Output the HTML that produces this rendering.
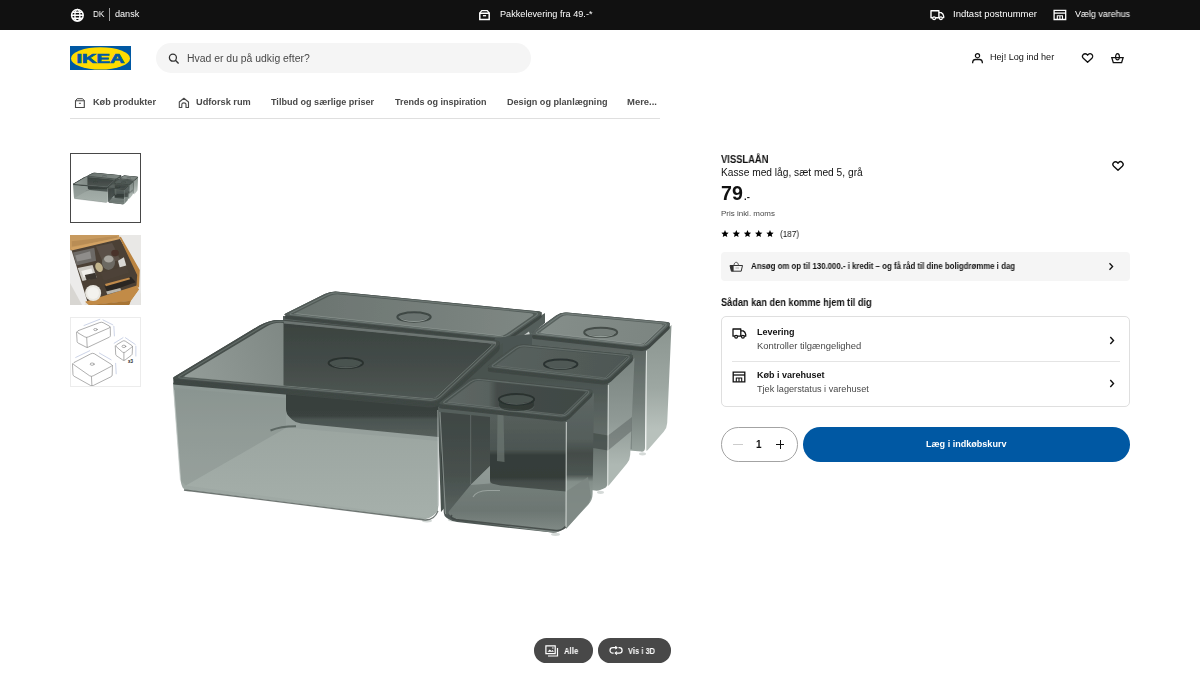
<!DOCTYPE html>
<html lang="da">
<head>
<meta charset="utf-8">
<title>VISSLAÅN Kasse med låg, sæt med 5, grå - IKEA</title>
<style>
*{box-sizing:border-box;margin:0;padding:0}
html,body{width:1200px;height:675px;overflow:hidden;background:#fff}
body{font-family:"Liberation Sans",sans-serif;color:#111;position:relative;font-size:10px}
.abs{position:absolute}
.t{position:absolute;white-space:nowrap;line-height:1;transform-origin:0 0;display:block;will-change:transform}
.b{font-weight:bold}
#topbar{position:absolute;left:0;top:0;width:1200px;height:30px;background:#111}
#search{position:absolute;left:156px;top:43px;width:374.5px;height:30px;border-radius:15px;background:#f5f5f5}
#navline{position:absolute;left:70px;top:118px;width:590px;height:1px;background:#dfdfdf}
.thumb{position:absolute;left:70px;width:71px;height:71px;overflow:hidden}
#credit{position:absolute;left:720.5px;top:252px;width:409.5px;height:29px;border-radius:4px;background:#f5f5f5}
#deliv{position:absolute;left:720.5px;top:315.5px;width:409.5px;height:91px;border:1px solid #dfdfdf;border-radius:5px}
#qty{position:absolute;left:720.5px;top:427px;width:77px;height:34.5px;border:1px solid #a3a3a3;border-radius:17.25px}
#buy{position:absolute;left:802.5px;top:427px;width:327.5px;height:34.5px;border-radius:17.25px;background:#0058a3}
.pill{position:absolute;top:638.3px;height:24.7px;border-radius:12.35px;background:#484848}
</style>
</head>
<body>
<!-- TOP BAR -->
<div id="topbar" style="height:29.5px">
  <svg class="abs" style="left:70px;top:7.5px" width="15" height="15" viewBox="0 0 15 15"><circle cx="7.4" cy="7.3" r="5.8" fill="none" stroke="#fff" stroke-width="1.5"/><ellipse cx="7.4" cy="7.3" rx="2.5" ry="5.8" fill="none" stroke="#fff" stroke-width="1.4"/><path d="M1.6 7.300h11.600M2.500 4.300h9.800M2.500 10.300h9.800" stroke="#fff" stroke-width="1.400" fill="none"/></svg>
  <div class="abs" style="left:109.200px;top:8.300px;width:1px;height:12.400px;background:#9c9c9c"></div>
  <svg class="abs" style="left:478px;top:9px" width="13" height="12" viewBox="0 0 13 12"><path d="M1.800 4.200h9.400v6.200H1.800z" fill="none" stroke="#fff" stroke-width="1.500"/><path d="M1.800 4.200L3.700 1.600h5.600l1.900 2.600" fill="none" stroke="#fff" stroke-width="1.300" stroke-linejoin="round"/><path d="M4.900 6.700h3.200" stroke="#fff" stroke-width="1.300"/></svg>
  <svg class="abs" style="left:930px;top:9px" width="15" height="12" viewBox="0 0 15 12"><path d="M1 1.700h7.900v7H1z" fill="none" stroke="#fff" stroke-width="1.400" stroke-linejoin="round"/><path d="M8.900 3.600h2.300c1.300.700 2.200 2 2.500 3.500v1.600H8.900" fill="none" stroke="#fff" stroke-width="1.300" stroke-linejoin="round"/><circle cx="4.100" cy="9.200" r="1.400" fill="#111" stroke="#fff" stroke-width="1.200"/><circle cx="10.900" cy="9.200" r="1.400" fill="#111" stroke="#fff" stroke-width="1.200"/></svg>
  <svg class="abs" style="left:1053px;top:9px" width="14" height="12" viewBox="0 0 14 12"><path d="M1.100 1.400h11.600v9.100H1.100z" fill="none" stroke="#fff" stroke-width="1.300"/><path d="M1.100 4.100h11.600" stroke="#fff" stroke-width="1.300"/><path d="M4.300 10.500V6.800h5.200v3.700M6.900 6.800v3.700" fill="none" stroke="#fff" stroke-width="1.100"/></svg>
</div>

<!-- HEADER -->
<svg class="abs" style="left:70px;top:45.700px" width="61" height="24.800" viewBox="0 0 61 24.800">
  <rect width="61" height="24.800" fill="#0058a3"/>
  <ellipse cx="30.500" cy="12.400" rx="29.500" ry="11.200" fill="#ffdb00"/>
  <text x="6.500" y="16.600" font-family="Liberation Sans, sans-serif" font-weight="bold" font-size="12" fill="#0058a3" stroke="#0058a3" stroke-width=".600" textLength="48" lengthAdjust="spacingAndGlyphs">IKEA</text>
</svg>
<div id="search" style="height:29.500px">
  <svg class="abs" style="left:12px;top:9.500px" width="12" height="12" viewBox="0 0 12 12"><circle cx="4.900" cy="4.700" r="3.500" fill="none" stroke="#333" stroke-width="1.300"/><path d="M7.400 7.300l3.200 3.100" stroke="#333" stroke-width="1.400"/></svg>
</div>
<svg class="abs" style="left:971px;top:52px" width="14" height="12" viewBox="0 0 14 12"><circle cx="6.500" cy="3.700" r="2.100" fill="none" stroke="#111" stroke-width="1.200"/><path d="M1.600 11.200c0-2.300 1.200-3.700 3-3.700h3.800c1.800 0 3 1.400 3 3.700" fill="none" stroke="#111" stroke-width="1.300"/></svg>
<svg class="abs" style="left:1081px;top:52px" width="14" height="12" viewBox="0 0 14 12"><path d="M6.600 10.300L2.300 6.200C1.300 5.200 1.300 3.500 2.300 2.500c1-1 2.700-1 3.700 0l.6.700.6-.7c1-1 2.700-1 3.700 0 1 1 1 2.700 0 3.700z" fill="none" stroke="#111" stroke-width="1.300" stroke-linejoin="round"/></svg>
<svg class="abs" style="left:1110px;top:52px" width="15" height="12" viewBox="0 0 15 12"><path d="M1.800 5.600h11.300l-1.500 5H3.300z" fill="none" stroke="#111" stroke-width="1.300" stroke-linejoin="miter"/><ellipse cx="7.500" cy="4.700" rx="1.900" ry="3.100" fill="none" stroke="#111" stroke-width="1.200"/></svg>

<!-- NAV -->
<svg class="abs" style="left:74px;top:96.500px" width="12" height="12" viewBox="0 0 12 12"><path d="M1.500 3.700h8.800v6.800H1.500z" fill="none" stroke="#484848" stroke-width="1.100"/><path d="M1.500 3.700l1.700-2h5.400l1.700 2" fill="none" stroke="#484848" stroke-width="1" stroke-linejoin="round"/><path d="M4.900 6.300h2" stroke="#484848" stroke-width="1"/></svg>
<svg class="abs" style="left:178px;top:96.500px" width="12" height="12" viewBox="0 0 12 12"><path d="M1.300 10.500V5l4.600-3.700L10.500 5v5.500H8V7.400c0-.9-.9-1.500-2.100-1.500s-2.100.6-2.100 1.500v3.100z" fill="none" stroke="#484848" stroke-width="1.100" stroke-linejoin="round"/></svg>
<div id="navline" style="top:117.800px"></div>

<!-- PRODUCT INFO -->
<svg class="abs" style="left:1110.500px;top:159.500px" width="14" height="12" viewBox="0 0 14 12"><path d="M7 10.300L2.700 6.200C1.700 5.200 1.700 3.500 2.700 2.500c1-1 2.700-1 3.700 0l.6.700.6-.7c1-1 2.700-1 3.700 0 1 1 1 2.700 0 3.700z" fill="none" stroke="#111" stroke-width="1.400" stroke-linejoin="round"/></svg>
<svg class="abs" style="left:720.500px;top:230px" width="54" height="8" viewBox="0 0 54 8">
 <defs><path id="st" d="M3.500 0l1.050 2.400 2.600.3-1.950 1.750.55 2.550L3.500 5.700 1.250 7l.55-2.550L-.15 2.700l2.600-.3z"/></defs>
 <use href="#st" x=".5"/><use href="#st" x="11.800"/><use href="#st" x="23"/><use href="#st" x="34.200"/><use href="#st" x="45.500"/>
</svg>
<div id="credit">
  <svg class="abs" style="left:8.500px;top:8.500px" width="15" height="12" viewBox="0 0 15 12"><path d="M1 4.500h12.500l-1.300 5.700H2.400z" fill="#f5f5f5" stroke="#333" stroke-width="1" stroke-linejoin="round"/><path d="M1 4.500h3.600v5.700H2.400z" fill="#333"/><path d="M5 4.300c0-1.800.9-3 2.200-3s2.200 1.200 2.200 3" fill="none" stroke="#555" stroke-width="1"/><path d="M6.500 7h3.500" stroke="#999" stroke-width=".8"/></svg>
  <svg class="abs" style="left:386px;top:10px" width="8" height="9" viewBox="0 0 8 9"><path d="M2.500 1.300l3.100 3.200-3.100 3.200" fill="none" stroke="#111" stroke-width="1.300"/></svg>
</div>
<div id="deliv">
  <div class="abs" style="left:10px;top:44px;width:388.500px;height:1px;background:#e4e4e4"></div>
  <svg class="abs" style="left:10.500px;top:11.500px" width="16" height="12" viewBox="0 0 16 12"><path d="M1 1h7.800v7.200H1z" fill="none" stroke="#111" stroke-width="1.300" stroke-linejoin="round"/><path d="M8.800 2.900h2.400c1.300.700 2.200 2 2.500 3.500v1.800H8.800" fill="none" stroke="#111" stroke-width="1.300" stroke-linejoin="round"/><circle cx="4.100" cy="8.800" r="1.400" fill="#fff" stroke="#111" stroke-width="1.200"/><circle cx="10.900" cy="8.800" r="1.400" fill="#fff" stroke="#111" stroke-width="1.200"/></svg>
  <svg class="abs" style="left:10.500px;top:54px" width="15" height="12" viewBox="0 0 15 12"><path d="M1.200 1.200h11.600v9.600H1.200z" fill="none" stroke="#111" stroke-width="1.300"/><path d="M1.200 4h11.600" stroke="#111" stroke-width="1.300"/><path d="M4.300 10.800V7h5.400v3.800M7 7v3.800" fill="none" stroke="#111" stroke-width="1.100"/></svg>
  <svg class="abs" style="left:386px;top:19px" width="8" height="9" viewBox="0 0 8 9"><path d="M2.300 1.100l3.200 3.400-3.200 3.400" fill="none" stroke="#111" stroke-width="1.400"/></svg>
  <svg class="abs" style="left:386px;top:62px" width="8" height="9" viewBox="0 0 8 9"><path d="M2.300 1.100l3.200 3.400-3.200 3.400" fill="none" stroke="#111" stroke-width="1.400"/></svg>
</div>
<div id="qty">
  <div class="abs" style="left:11.500px;top:16.300px;width:9.700px;height:1px;background:#ccc"></div>
  <div class="abs" style="left:54.200px;top:16.200px;width:8.800px;height:1.100px;background:#111"></div>
  <div class="abs" style="left:58.100px;top:12.300px;width:1.100px;height:8.800px;background:#111"></div>
</div>
<div id="buy"></div>

<!-- IMAGE BUTTONS -->
<div class="pill" style="left:533.700px;width:59.300px">
  <svg class="abs" style="left:11px;top:6.500px" width="14" height="12" viewBox="0 0 14 12"><path d="M.9.900h9.300v7.700H.9z" fill="none" stroke="#fff" stroke-width="1.200"/><path d="M12.500 3v8H3" fill="none" stroke="#fff" stroke-width="1.200"/><path d="M2.500 6.800l2.200-2.400 1.800 1.700 1-1 1.500 1.700z" fill="#fff"/><circle cx="7.900" cy="3" r=".7" fill="#fff"/></svg>
</div>
<div class="pill" style="left:598px;width:72.600px">
  <svg class="abs" style="left:10.500px;top:8px" width="14" height="9" viewBox="0 0 14 9"><path d="M9.500 1.700h.8c1.600 0 2.800 1.200 2.800 2.700s-1.200 2.700-2.800 2.700H6.600M4.600 7.100h-.8C2.200 7.100 1 5.900 1 4.400s1.200-2.700 2.800-2.700h3.700" fill="none" stroke="#fff" stroke-width="1.200"/><path d="M6.300.2l1.700 1.500-1.700 1.500M7.900 5.600L6.200 7.100l1.700 1.500" fill="none" stroke="#fff" stroke-width="1.100"/></svg>
</div>

<!-- TEXT -->
<span class="t" style="left:92.70px;top:10.18px;font-size:9px;color:#fff;transform:scaleX(0.9029)">DK</span>
<span class="t" style="left:115.00px;top:10.18px;font-size:9px;color:#fff;transform:scaleX(1.0112)">dansk</span>
<span class="t" style="left:499.50px;top:10.18px;font-size:9px;color:#fff;transform:scaleX(1.0160)">Pakkelevering fra 49.-*</span>
<span class="t" style="left:952.80px;top:10.18px;font-size:9px;color:#fff;transform:scaleX(1.0560)">Indtast postnummer</span>
<span class="t" style="left:1074.50px;top:10.18px;font-size:9px;color:#fff;transform:scaleX(0.9904)">Vælg varehus</span>
<span class="t" style="left:186.80px;top:54.03px;font-size:10px;color:#484848;transform:scaleX(1.0411)">Hvad er du på udkig efter?</span>
<span class="t" style="left:990.30px;top:52.98px;font-size:9px;color:#111;transform:scaleX(1.0103)">Hej! Log ind her</span>
<span class="t b" style="left:92.50px;top:98.08px;font-size:9px;color:#484848;transform:scaleX(1.0161)">Køb produkter</span>
<span class="t b" style="left:195.75px;top:98.08px;font-size:9px;color:#484848;transform:scaleX(1.0231)">Udforsk rum</span>
<span class="t b" style="left:271.00px;top:98.08px;font-size:9px;color:#484848;transform:scaleX(1.0063)">Tilbud og særlige priser</span>
<span class="t b" style="left:394.50px;top:98.08px;font-size:9px;color:#484848;transform:scaleX(0.9998)">Trends og inspiration</span>
<span class="t b" style="left:506.50px;top:98.08px;font-size:9px;color:#484848;transform:scaleX(1.0101)">Design og planlægning</span>
<span class="t b" style="left:627.00px;top:98.08px;font-size:9px;color:#484848;transform:scaleX(1.0521)">Mere...</span>
<span class="t b" style="left:720.60px;top:154.87px;font-size:10.2px;color:#111;transform:scaleX(0.9201)">VISSLAÅN</span>
<span class="t" style="left:720.60px;top:167.84px;font-size:10px;color:#111;transform:scaleX(1.0197)">Kasse med låg, sæt med 5, grå</span>
<span class="t b" style="left:720.60px;top:183.91px;font-size:19.6px;color:#111;transform:scaleX(0.9956)">79</span>
<span class="t b" style="left:743.70px;top:192.46px;font-size:9.5px;color:#111;transform:scaleX(0.9806)">.-</span>
<span class="t" style="left:720.60px;top:209.90px;font-size:7.8px;color:#484848;transform:scaleX(1.0216)">Pris inkl. moms</span>
<span class="t" style="left:780.00px;top:229.69px;font-size:8.75px;color:#111;transform:scaleX(0.9297)">(187)</span>
<span class="t b" style="left:750.70px;top:262.86px;font-size:8.2px;color:#111;transform:scaleX(0.9576)">Ansøg om op til 130.000.- i kredit – og få råd til dine boligdrømme i dag</span>
<span class="t b" style="left:720.70px;top:297.87px;font-size:10.2px;color:#111;transform:scaleX(0.9018)">Sådan kan den komme hjem til dig</span>
<span class="t b" style="left:756.70px;top:327.98px;font-size:9px;color:#111;transform:scaleX(0.9943)">Levering</span>
<span class="t" style="left:756.70px;top:341.68px;font-size:9px;color:#484848;transform:scaleX(1.0476)">Kontroller tilgængelighed</span>
<span class="t b" style="left:756.70px;top:370.98px;font-size:9px;color:#111;transform:scaleX(0.9966)">Køb i varehuset</span>
<span class="t" style="left:756.70px;top:384.68px;font-size:9px;color:#484848;transform:scaleX(1.0158)">Tjek lagerstatus i varehuset</span>
<span class="t b" style="left:755.90px;top:439.94px;font-size:10px;color:#111;transform:scaleX(0.9996)">1</span>
<span class="t b" style="left:926.00px;top:439.68px;font-size:9px;color:#fff;transform:scaleX(1.0061)">Læg i indkøbskurv</span>
<span class="t b" style="left:563.70px;top:646.75px;font-size:8.8px;color:#fff;transform:scaleX(0.8860)">Alle</span>
<span class="t b" style="left:628.00px;top:646.75px;font-size:8.8px;color:#fff;transform:scaleX(0.8538)">Vis i 3D</span>
<!-- THUMBS -->
<div class="thumb" style="top:153px;left:70.300px;width:70.500px;height:70.300px;border:1px solid #484848">
  <svg class="abs" style="left:-1px;top:-1px" width="70.500" height="70.500" viewBox="150 140 540 540"><use href="#prod"/></svg>
</div>
<div class="thumb" style="top:235px;left:70.300px;width:70.500px;height:70px">
  <svg width="70.500" height="70" viewBox="45 42 595 591">
    <defs><filter id="tb" x="-5%" y="-5%" width="110%" height="110%"><feGaussianBlur stdDeviation="5"/></filter></defs>
    <rect x="45" y="42" width="595" height="591" fill="#e4e2de"/>
    <g filter="url(#tb)">
      <rect x="20" y="20" width="660" height="660" fill="#e2e0dc"/>
      <path d="M440 30H660V520L610 560L630 340L470 60z" fill="#e9e8e6"/>
      <path d="M30 30H455L465 70L55 165L30 190z" fill="#c79a5e"/>
      <path d="M60 95L440 50L452 68L62 140z" fill="#b98d55"/>
      <path d="M55 160L462 68L625 345L615 475L178 612L50 215z" fill="#4b4035"/>
      <path d="M50 150L462 60L468 76L58 172z" fill="#d2a264"/>
      <path d="M462 62L474 56L634 338L628 488L606 472L612 380z" fill="#bb8440"/>
      <path d="M30 185L58 170L190 600L160 640L30 640z" fill="#ecebea"/>
      <path d="M30 420L150 640H30z" fill="#d8d6d2"/>
      <path d="M172 606L610 468L628 505L560 600L205 636z" fill="#c28b46"/>
      <path d="M205 632L560 598L540 650H215z" fill="#a87435"/>
      <path d="M560 600L628 505L640 520V640H545z" fill="#e6e5e3"/>
      <!-- items -->
      <path d="M70 190L250 150L265 260L100 300z" fill="#6d6a66"/>
      <path d="M90 215L215 180L225 240L105 265z" fill="#8f8d8a"/>
      <path d="M110 320L235 295L270 400L150 430z" fill="#cfccc6"/>
      <path d="M140 345L225 325L245 385L160 400z" fill="#efede9"/>
      <path d="M170 380L260 360L270 410L185 425z" fill="#3a352f"/>
      <circle cx="240" cy="532" r="68" fill="#e9e7e1"/>
      <circle cx="240" cy="532" r="50" fill="#f3f2ee"/>
      <path d="M265 140L400 110L470 250L330 290z" fill="#5a5046"/>
      <ellipse cx="370" cy="275" rx="55" ry="62" fill="#6c6962"/>
      <ellipse cx="372" cy="245" rx="40" ry="30" fill="#a8a59e"/>
      <ellipse cx="290" cy="315" rx="30" ry="42" fill="#c2b48c" transform="rotate(-25 290 315)"/>
      <ellipse cx="425" cy="195" rx="32" ry="28" fill="#4a3029"/>
      <path d="M450 260L500 230L520 300L470 335z" fill="#d9d8d4"/>
      <path d="M300 360L520 300L545 360L330 430z" fill="#4d4337"/>
      <path d="M335 470L560 395L600 440L360 525z" fill="#2c2823"/>
      <path d="M340 455L545 400L552 415L348 475z" fill="#c08a4b"/>
      <path d="M350 520L470 490L478 510L360 545z" fill="#b9b6ae"/>
    </g>
  </svg>
</div>
<div class="thumb" style="top:317px;left:70.300px;width:70.500px;height:70px;border:1px solid #ececec">
  <svg class="abs" style="left:-1px;top:-1px" width="70.500" height="70" viewBox="45 42 595 591">
    <g fill="none" stroke="#555" stroke-width="5" stroke-linejoin="round" stroke-linecap="round" opacity=".8">
      <path d="M110 160Q100 168 112 176L170 210Q185 218 200 210L375 135Q390 127 378 119L325 90Q312 83 298 88z"/>
      <path d="M100 170L105 250Q106 258 114 262L180 296Q190 301 200 296L378 212Q386 207 386 198L385 128M186 216L190 298"/>
      <ellipse cx="260" cy="148" rx="15" ry="9"/>
      <path d="M436 278Q424 286 436 293L488 338Q500 347 512 338L566 297Q578 289 566 282L512 246Q500 238 488 246z"/>
      <path d="M427 288L431 358Q432 366 440 371L490 405Q500 411 510 405L562 366Q570 360 570 352L573 292M500 345L500 408"/>
      <ellipse cx="500" cy="290" rx="16" ry="10"/>
      <path d="M76 428Q62 436 76 444L210 538Q226 548 242 538L394 458Q408 450 394 442L250 352Q236 344 222 352z"/>
      <path d="M66 440L70 528Q71 537 79 542L218 620Q230 627 242 620L392 546Q401 541 401 532L403 452M226 546L230 624"/>
      <ellipse cx="232" cy="440" rx="17" ry="10"/>
    </g>
    <g fill="none" stroke="#7f93c4" stroke-width="4" opacity=".85">
      <path d="M160 115L300 60M320 65L410 110M415 118L420 205"/>
      <path d="M415 265L495 215M510 215L598 275M601 285L601 375"/>
      <path d="M90 385L215 325M290 345L395 405M430 430L435 525"/>
    </g>
    <text x="535" y="434" font-family="Liberation Sans, sans-serif" font-weight="bold" font-size="38" fill="#222">x3</text>
  </svg>
</div>

<!-- MAIN IMAGE -->
<div class="abs" style="left:150px;top:130px;width:540px;height:505px;overflow:hidden">
<svg width="540" height="505" viewBox="150 130 540 505">
<defs>
<linearGradient id="gB" gradientUnits="userSpaceOnUse" x1="300" y1="300" x2="540" y2="330"><stop offset="0" stop-color="#6b7470"/><stop offset="1" stop-color="#7f8884"/></linearGradient>
<linearGradient id="gk1" gradientUnits="userSpaceOnUse" x1="0" y1="311.7" x2="0" y2="322.3"><stop offset="0" stop-color="#3a423f"/><stop offset="0.6" stop-color="#3a423f"/><stop offset="0.9" stop-color="#a2aba7"/><stop offset="1" stop-color="#a2aba7"/></linearGradient>
<linearGradient id="gCf" gradientUnits="userSpaceOnUse" x1="0" y1="345" x2="0" y2="452"><stop offset="0" stop-color="#59625f"/><stop offset="0.55" stop-color="#737d79"/><stop offset="1" stop-color="#98a39e"/></linearGradient>
<linearGradient id="gCr" gradientUnits="userSpaceOnUse" x1="0" y1="325" x2="0" y2="430"><stop offset="0" stop-color="#8a948f"/><stop offset="0.6" stop-color="#9da7a2"/><stop offset="1" stop-color="#b8c1bc"/></linearGradient>
<linearGradient id="gC" gradientUnits="userSpaceOnUse" x1="540" y1="320" x2="660" y2="340"><stop offset="0" stop-color="#858e8a"/><stop offset="1" stop-color="#7c8581"/></linearGradient>
<linearGradient id="gk2" gradientUnits="userSpaceOnUse" x1="0" y1="327.09999999999997" x2="0" y2="337.7"><stop offset="0" stop-color="#3f4744"/><stop offset="0.6" stop-color="#3f4744"/><stop offset="0.9" stop-color="#a8b1ad"/><stop offset="1" stop-color="#a8b1ad"/></linearGradient>
<linearGradient id="gAf" gradientUnits="userSpaceOnUse" x1="0" y1="386" x2="0" y2="520"><stop offset="0" stop-color="#8d9894"/><stop offset="0.35" stop-color="#96a09c"/><stop offset="1" stop-color="#a2aca7"/></linearGradient>
<linearGradient id="gAfl" gradientUnits="userSpaceOnUse" x1="0" y1="430" x2="0" y2="520"><stop offset="0" stop-color="#9da7a2"/><stop offset="1" stop-color="#a7b1ac"/></linearGradient>
<linearGradient id="gAb" gradientUnits="userSpaceOnUse" x1="0" y1="390" x2="0" y2="437"><stop offset="0" stop-color="#363e3b"/><stop offset="0.55" stop-color="#3a423f"/><stop offset="0.62" stop-color="#4a5350"/><stop offset="1" stop-color="#565f5c"/></linearGradient>
<linearGradient id="gA" gradientUnits="userSpaceOnUse" x1="180" y1="380" x2="300" y2="330"><stop offset="0" stop-color="#949d99"/><stop offset="1" stop-color="#7d8682"/></linearGradient>
<linearGradient id="gAd" gradientUnits="userSpaceOnUse" x1="0" y1="325" x2="0" y2="400"><stop offset="0" stop-color="#3b4340"/><stop offset="0.5" stop-color="#434b48"/><stop offset="1" stop-color="#4e5653"/></linearGradient>
<linearGradient id="gk3" gradientUnits="userSpaceOnUse" x1="0" y1="357.4" x2="0" y2="368.6"><stop offset="0" stop-color="#272f2c"/><stop offset="0.6" stop-color="#272f2c"/><stop offset="0.9" stop-color="#79837f"/><stop offset="1" stop-color="#79837f"/></linearGradient>
<linearGradient id="gDf" gradientUnits="userSpaceOnUse" x1="0" y1="380" x2="0" y2="492"><stop offset="0" stop-color="#4a5350"/><stop offset="0.6" stop-color="#68726e"/><stop offset="1" stop-color="#909b96"/></linearGradient>
<linearGradient id="gDr" gradientUnits="userSpaceOnUse" x1="0" y1="357" x2="0" y2="465"><stop offset="0" stop-color="#79837f"/><stop offset="0.6" stop-color="#909a96"/><stop offset="1" stop-color="#aeb8b3"/></linearGradient>
<linearGradient id="gD" gradientUnits="userSpaceOnUse" x1="500" y1="350" x2="620" y2="375"><stop offset="0" stop-color="#58615e"/><stop offset="1" stop-color="#4e5754"/></linearGradient>
<linearGradient id="gk4" gradientUnits="userSpaceOnUse" x1="0" y1="358.8" x2="0" y2="369.59999999999997"><stop offset="0" stop-color="#272f2c"/><stop offset="0.6" stop-color="#272f2c"/><stop offset="0.9" stop-color="#808a86"/><stop offset="1" stop-color="#808a86"/></linearGradient>
<linearGradient id="gEf" gradientUnits="userSpaceOnUse" x1="0" y1="417" x2="0" y2="533"><stop offset="0" stop-color="#555e5b"/><stop offset="0.28" stop-color="#4c5552"/><stop offset="0.33" stop-color="#363e3b"/><stop offset="0.52" stop-color="#343c39"/><stop offset="0.56" stop-color="#444c49"/><stop offset="0.62" stop-color="#48514e"/><stop offset="1" stop-color="#525b58"/></linearGradient>
<linearGradient id="gEr" gradientUnits="userSpaceOnUse" x1="0" y1="392" x2="0" y2="510"><stop offset="0" stop-color="#5d6764"/><stop offset="0.4" stop-color="#555e5b"/><stop offset="0.52" stop-color="#444c49"/><stop offset="0.7" stop-color="#4c5552"/><stop offset="0.76" stop-color="#838e89"/><stop offset="1" stop-color="#99a49f"/></linearGradient>
<linearGradient id="gEl" gradientUnits="userSpaceOnUse" x1="0" y1="420" x2="0" y2="515"><stop offset="0" stop-color="#3f4744"/><stop offset="0.6" stop-color="#48514e"/><stop offset="1" stop-color="#5a6360"/></linearGradient>
<linearGradient id="gEfl" gradientUnits="userSpaceOnUse" x1="0" y1="466" x2="0" y2="530"><stop offset="0" stop-color="#8a9490"/><stop offset="0.3" stop-color="#737d79"/><stop offset="0.7" stop-color="#6c7672"/><stop offset="1" stop-color="#7f8985"/></linearGradient>
<linearGradient id="gE" gradientUnits="userSpaceOnUse" x1="445" y1="0" x2="590" y2="0"><stop offset="0" stop-color="#5e6764"/><stop offset="0.3" stop-color="#59625f"/><stop offset="0.36" stop-color="#444c49"/><stop offset="1" stop-color="#3f4744"/></linearGradient>
<linearGradient id="gk5" gradientUnits="userSpaceOnUse" x1="0" y1="393.5" x2="0" y2="405.1"><stop offset="0" stop-color="#272f2c"/><stop offset="0.6" stop-color="#272f2c"/><stop offset="0.9" stop-color="#7d8783"/><stop offset="1" stop-color="#7d8783"/></linearGradient>
<filter id="soft" x="-2%" y="-2%" width="104%" height="104%"><feGaussianBlur stdDeviation=".45"/></filter>
</defs>
<g id="prod" filter="url(#soft)">
<ellipse cx="188.5" cy="489.8" rx="4.5" ry="1.6" fill="#d5dad8"/>
<ellipse cx="427.0" cy="520.8" rx="5.0" ry="1.6" fill="#d5dad8"/>
<ellipse cx="452.0" cy="519.8" rx="4.0" ry="1.6" fill="#d5dad8"/>
<ellipse cx="555.5" cy="534.3" rx="4.5" ry="1.6" fill="#d5dad8"/>
<ellipse cx="600.5" cy="492.3" rx="3.5" ry="1.6" fill="#d5dad8"/>
<ellipse cx="642.5" cy="453.8" rx="3.5" ry="1.6" fill="#d5dad8"/>
<path d="M283.0 316.0L505.0 338.0L545.0 313.0L545.0 323.0L512.0 350.0L283.0 330.0Z" fill="#555e5b"/>
<path d="M286.5 318.9Q282.5 318.5 286.1 316.7L324.7 297.6Q331.0 294.5 338.0 295.2L538.0 314.8Q545.0 315.5 539.2 319.5L510.9 339.1Q506.0 342.5 500.0 341.9Z" fill="#3f4744"/>
<path d="M286.5 317.2Q282.5 316.8 286.1 315.0L324.7 295.9Q331.0 292.8 338.0 293.4L538.0 313.1Q545.0 313.8 539.2 317.7L510.9 337.3Q506.0 340.8 500.0 340.1Z" fill="#3f4744"/>
<path d="M286.5 315.4Q282.5 315.0 286.1 313.2L324.7 294.1Q331.0 291.0 338.0 291.7L538.0 311.3Q545.0 312.0 539.2 316.0L510.9 335.6Q506.0 339.0 500.0 338.4Z" fill="#3f4744"/>
<path d="M286.5 315.4Q282.5 315.0 286.1 313.2L324.7 294.1Q331.0 291.0 338.0 291.7L538.0 311.3Q545.0 312.0 539.2 316.0L510.9 335.6Q506.0 339.0 500.0 338.4Z" fill="#525b58"/>
<path d="M291.9 314.7Q288.4 314.3 291.5 312.8L327.2 295.1Q332.6 292.5 338.5 293.0L534.3 312.3Q540.3 312.8 535.3 316.3L508.7 334.7Q504.6 337.5 499.6 337.0Z" fill="none" stroke="#747e7a" stroke-width="1.1" opacity="0.8"/>
<path d="M297.2 314.0Q294.3 313.6 296.9 312.3L329.6 296.1Q334.1 293.9 339.1 294.4L530.6 313.2Q535.5 313.7 531.4 316.5L506.5 333.8Q503.2 336.1 499.2 335.7Z" fill="url(#gB)"/>
<path d="M294.3 313.6L503.2 336.1" fill="none" stroke="#a9b1ae" stroke-width="0.7" opacity="0.6"/>
<ellipse cx="414" cy="317" rx="16.7" ry="4.7" fill="#6a7370" stroke="#3a423f" stroke-width="2" stroke-opacity=".9"/>
<path d="M400.0 317.8a14.0 2.9 0 0 0 28.0 0a14.0 4.1 0 0 1 -28.0 0z" fill="#a2aba7" opacity="0.8"/>
<path d="M512.0 343.5L529.0 331.5L531.0 338.0L518.0 346.5L512.0 346.5Z" fill="#cdd3d0"/>
<path d="M531.0 338.0L646.0 350.0L645.0 448.0Q645.0 452.0 641.0 451.6L612.0 449.0L531.0 420.0Z" fill="url(#gCf)"/>
<path d="M646.0 350.0L671.5 325.0L667.2 423.0Q667.0 428.0 663.7 431.8L648.0 449.7Q646.0 452.0 646.0 449.0Z" fill="url(#gCr)"/>
<path d="M646.5 351.0L646.0 450.0" fill="none" stroke="#e6ebe8" stroke-width="1" opacity="0.85"/>
<path d="M631.0 352.0L631.0 449.0" fill="none" stroke="#3a423f" stroke-width="1.2" opacity="0.35"/>
<path d="M534.0 338.9Q530.0 338.5 533.2 336.2L556.1 319.5Q561.0 316.0 567.0 316.6L667.0 326.0Q672.0 326.5 668.4 330.0L649.6 348.0Q646.0 351.5 641.0 350.9Z" fill="#3f4744"/>
<path d="M534.0 337.6Q530.0 337.2 533.2 334.8L556.1 318.2Q561.0 314.7 567.0 315.2L667.0 324.7Q672.0 325.2 668.4 328.6L649.6 346.7Q646.0 350.2 641.0 349.6Z" fill="#3f4744"/>
<path d="M534.0 336.3Q530.0 335.8 533.2 333.5L556.1 316.9Q561.0 313.3 567.0 313.9L667.0 323.4Q672.0 323.8 668.4 327.3L649.6 345.4Q646.0 348.8 641.0 348.3Z" fill="#3f4744"/>
<path d="M534.0 334.9Q530.0 334.5 533.2 332.2L556.1 315.5Q561.0 312.0 567.0 312.6L667.0 322.0Q672.0 322.5 668.4 326.0L649.6 344.0Q646.0 347.5 641.0 346.9Z" fill="#3f4744"/>
<path d="M534.0 334.9Q530.0 334.5 533.2 332.2L556.1 315.5Q561.0 312.0 567.0 312.6L667.0 322.0Q672.0 322.5 668.4 326.0L649.6 344.0Q646.0 347.5 641.0 346.9Z" fill="#59625f"/>
<path d="M538.1 334.0Q534.6 333.6 537.5 331.6L558.4 316.4Q562.4 313.4 567.4 313.9L663.7 323.0Q668.1 323.4 664.9 326.6L648.0 342.8Q644.7 345.9 640.3 345.4Z" fill="none" stroke="#7b8581" stroke-width="1.1" opacity="0.8"/>
<path d="M542.2 333.1Q539.3 332.7 541.7 331.0L560.6 317.2Q563.8 314.9 567.8 315.3L660.3 324.0Q664.3 324.4 661.4 327.2L646.3 341.6Q643.5 344.4 639.5 344.0Z" fill="url(#gC)"/>
<path d="M539.3 332.7L643.5 344.4L664.3 324.4" fill="none" stroke="#aab2af" stroke-width="0.7" opacity="0.6"/>
<ellipse cx="600.7" cy="332.4" rx="16.5" ry="4.7" fill="#757e7a" stroke="#3f4744" stroke-width="2" stroke-opacity=".9"/>
<path d="M586.9000000000001 333.2a13.8 2.9 0 0 0 27.6 0a13.8 4.1 0 0 1 -27.6 0z" fill="#a8b1ad" opacity="0.8"/>
<path d="M495.0 338.0L532.0 334.0L532.0 374.0L486.0 374.0Z" fill="#4c5552"/>
<path d="M437.5 404.0L503.0 343.0L503.0 440.0L441.0 512.0Z" fill="#49524f"/>
<path d="M173.0 383.0L438.5 407.0L438.5 505.0Q438.5 511.0 433.9 514.9L433.2 515.5Q428.0 520.0 420.1 519.0L187.0 490.0Q183.0 489.5 181.9 485.7L181.3 483.9Q180.5 481.0 180.3 478.0Z" fill="url(#gAf)"/>
<path d="M174.0 388.0L286.0 398.0L286.0 428.0L186.0 485.5L180.5 480.0Z" fill="#7f8a86" opacity="0.22"/>
<path d="M186.0 485.5L287.0 427.5L438.0 441.0L438.0 511.0L428.0 518.0Z" fill="url(#gAfl)" opacity="0.8"/>
<path d="M286.0 388.0L438.5 404.0L438.5 437.0L301.0 423.5Q296.0 423.0 292.3 419.7L289.7 417.3Q286.0 414.0 286.0 409.0Z" fill="url(#gAb)"/>
<path d="M270.5 430.5Q281 426.2 296 426.3" fill="none" stroke="#5d6764" stroke-width="2"/>
<path d="M184 490Q300 504.5 425 520Q434 520.5 438 511" fill="none" stroke="#4d5653" stroke-width="1.3" opacity="0.8"/>
<path d="M173.8 390.0L180.5 480.0" fill="none" stroke="#c5ccc9" stroke-width="1.2" opacity="0.7"/>
<path d="M437.8 410.0L438.0 506.0" fill="none" stroke="#c5ccc9" stroke-width="1" opacity="0.6"/>
<path d="M175.8 384.8Q170.8 384.4 175.1 381.8L259.4 331.1Q270.5 324.4 283.4 325.7L495.0 346.1Q503.0 346.9 497.2 352.4L443.3 402.6Q437.5 408.1 429.5 407.4Z" fill="#3f4744"/>
<path d="M175.8 383.4Q170.8 383.0 175.1 380.4L259.4 329.7Q270.5 323.0 283.4 324.3L495.0 344.7Q503.0 345.5 497.2 351.0L443.3 401.2Q437.5 406.7 429.5 406.0Z" fill="#3f4744"/>
<path d="M175.8 382.0Q170.8 381.6 175.1 379.0L259.4 328.3Q270.5 321.6 283.4 322.9L495.0 343.3Q503.0 344.1 497.2 349.6L443.3 399.8Q437.5 405.3 429.5 404.6Z" fill="#3f4744"/>
<path d="M175.8 380.6Q170.8 380.2 175.1 377.6L259.4 326.9Q270.5 320.2 283.4 321.5L495.0 341.9Q503.0 342.7 497.2 348.2L443.3 398.4Q437.5 403.9 429.5 403.2Z" fill="#3f4744"/>
<path d="M175.8 379.2Q170.8 378.8 175.1 376.2L259.4 325.5Q270.5 318.8 283.4 320.1L495.0 340.5Q503.0 341.3 497.2 346.8L443.3 397.0Q437.5 402.5 429.5 401.8Z" fill="#3f4744"/>
<path d="M175.8 379.2Q170.8 378.8 175.1 376.2L259.4 325.5Q270.5 318.8 283.4 320.1L495.0 340.5Q503.0 341.3 497.2 346.8L443.3 397.0Q437.5 402.5 429.5 401.8Z" fill="#474f4c"/>
<path d="M180.9 378.2Q176.9 377.8 180.3 375.8L262.8 326.1Q272.2 320.5 283.1 321.5L491.5 341.7Q498.5 342.4 493.4 347.1L441.0 396.1Q435.9 400.9 428.9 400.2Z" fill="none" stroke="#67716d" stroke-width="1.3" opacity="0.8"/>
<path d="M185.9 377.1Q182.9 376.9 185.5 375.3L266.2 326.8Q273.9 322.1 282.8 323.0L488.0 342.9Q494.0 343.4 489.6 347.5L438.7 395.1Q434.3 399.2 428.3 398.7Z" fill="url(#gA)"/>
<path d="M283.5 323.1L488.0 342.9Q494.0 343.4 489.6 347.5L438.7 395.1Q434.3 399.2 428.3 398.7L283.5 385.8Z" fill="url(#gAd)"/>
<path d="M182.9 376.9L434.3 399.2L494.0 343.4" fill="none" stroke="#8d9692" stroke-width="0.8" opacity="0.45"/>
<path d="M284.0 322.3L496.0 342.9" fill="none" stroke="#737b78" stroke-width="2.2" opacity="0.8"/>
<ellipse cx="345.8" cy="363" rx="17.2" ry="5.0" fill="#4a5350" stroke="#272f2c" stroke-width="2" stroke-opacity=".9"/>
<path d="M331.3 363.8a14.5 3.1999999999999997 0 0 0 29 0a14.5 4.3999999999999995 0 0 1 -29 0z" fill="#79837f" opacity="0.52"/>
<path d="M487.0 371.0L608.0 384.0L607.5 483.0Q607.5 487.0 603.8 488.6L600.8 489.8Q598.0 491.0 595.0 490.6L560.0 486.0L487.0 440.0Z" fill="url(#gDf)"/>
<path d="M608.0 384.0L634.5 358.0L630.2 455.0Q630.0 460.0 626.8 463.8L609.4 484.7Q607.5 487.0 607.5 484.0Z" fill="url(#gDr)"/>
<path d="M593.0 433.0L608.0 435.5L608.0 450.5L593.0 448.0Z" fill="#3c4441" opacity="0.6"/>
<path d="M608.0 435.5L632.0 417.0L631.5 431.0L608.0 450.5Z" fill="#59625f" opacity="0.5"/>
<path d="M608.3 385.0L607.8 486.0" fill="none" stroke="#e6ebe8" stroke-width="1" opacity="0.85"/>
<path d="M490.0 371.9Q486.0 371.5 489.2 369.1L513.2 351.6Q518.0 348.0 524.0 348.6L630.0 358.5Q635.0 359.0 631.4 362.4L611.1 381.6Q607.5 385.0 602.5 384.4Z" fill="#3f4744"/>
<path d="M490.0 370.6Q486.0 370.2 489.2 367.8L513.2 350.2Q518.0 346.7 524.0 347.2L630.0 357.2Q635.0 357.7 631.4 361.1L611.1 380.2Q607.5 383.7 602.5 383.1Z" fill="#3f4744"/>
<path d="M490.0 369.3Q486.0 368.8 489.2 366.5L513.2 348.9Q518.0 345.3 524.0 345.9L630.0 355.9Q635.0 356.3 631.4 359.8L611.1 378.9Q607.5 382.3 602.5 381.8Z" fill="#3f4744"/>
<path d="M490.0 367.9Q486.0 367.5 489.2 365.1L513.2 347.6Q518.0 344.0 524.0 344.6L630.0 354.5Q635.0 355.0 631.4 358.4L611.1 377.6Q607.5 381.0 602.5 380.4Z" fill="#3f4744"/>
<path d="M490.0 367.9Q486.0 367.5 489.2 365.1L513.2 347.6Q518.0 344.0 524.0 344.6L630.0 354.5Q635.0 355.0 631.4 358.4L611.1 377.6Q607.5 381.0 602.5 380.4Z" fill="#4a5350"/>
<path d="M494.1 367.0Q490.6 366.6 493.4 364.5L515.4 348.4Q519.4 345.4 524.4 345.9L626.6 355.5Q631.1 355.9 627.8 359.0L609.5 376.4Q606.2 379.5 601.8 379.0Z" fill="none" stroke="#69736f" stroke-width="1.1" opacity="0.8"/>
<path d="M498.2 366.0Q495.2 365.7 497.6 363.9L517.6 349.2Q520.8 346.9 524.8 347.3L623.2 356.5Q627.2 356.9 624.3 359.6L607.9 375.2Q605.0 377.9 601.0 377.5Z" fill="url(#gD)"/>
<path d="M495.2 365.7L605.0 377.9L627.2 356.9" fill="none" stroke="#868f8b" stroke-width="0.7" opacity="0.45"/>
<ellipse cx="560.7" cy="364.2" rx="16.7" ry="4.800000000000001" fill="#4f5855" stroke="#272f2c" stroke-width="2" stroke-opacity=".9"/>
<path d="M546.7 365.0a14.0 3.0000000000000004 0 0 0 28.0 0a14.0 4.2 0 0 1 -28.0 0z" fill="#808a86" opacity="0.52"/>
<path d="M438.5 408.0L566.0 421.0L566.0 522.0Q566.0 527.0 561.7 529.6L559.4 530.9Q556.0 533.0 552.0 532.6L457.0 522.0Q452.0 521.5 448.0 518.8L446.5 517.7Q444.0 516.0 443.8 513.0Z" fill="url(#gEf)"/>
<path d="M440.0 412.0L490.0 417.0L490.0 470.0L447.0 515.0L444.0 512.0Z" fill="url(#gEl)"/>
<path d="M449.8 514.9Q447.5 513.0 449.4 510.7L470.5 485.0L490.0 466.0L490.0 480.0Q490.0 483.0 492.9 483.7L500.5 485.5L566.0 491.5L566.0 528.0L559.6 531.2Q556.0 533.0 552.0 532.5L460.5 520.2Q455.5 519.5 451.6 516.3Z" fill="url(#gEfl)"/>
<path d="M470.5 485.0L490.0 466.0L490.0 483.5Z" fill="#929c98" opacity="0.8"/>
<path d="M473 497Q476 491 488 490.5L500 490.5" fill="none" stroke="#a9b2ae" stroke-width="1.1" opacity="0.7"/>
<path d="M452 515Q449 518.5 456 519.5L556 530.5Q562 531 566 526" fill="none" stroke="#3f4744" stroke-width="1.5" opacity="0.85"/>
<path d="M497.5 412.0L503.5 412.5L504.5 462.0L497.0 461.0Z" fill="#6d7773" opacity="0.7"/>
<path d="M470.7 415.0L470.7 484.0" fill="none" stroke="#7b8581" stroke-width="0.9" opacity="0.6"/>
<path d="M566.0 421.0L594.0 393.0L592.6 494.0Q592.5 500.0 588.5 504.4L568.0 526.8Q566.0 529.0 566.0 526.0Z" fill="url(#gEr)"/>
<path d="M566.0 491.5L588.0 477.0L591.0 497.0L589.0 503.0L566.0 529.0Z" fill="#7c8682" opacity="0.9"/>
<path d="M566.3 422.0L566.0 527.0" fill="none" stroke="#e6ebe8" stroke-width="1" opacity="0.85"/>
<path d="M440.0 412.0L445.5 514.0" fill="none" stroke="#aab3af" stroke-width="1" opacity="0.6"/>
<path d="M441.5 408.4Q437.5 408.0 440.7 405.6L468.2 385.1Q473.0 381.5 479.0 382.1L589.5 393.5Q594.5 394.0 590.9 397.5L569.6 418.5Q566.0 422.0 561.0 421.5Z" fill="#3f4744"/>
<path d="M441.5 407.1Q437.5 406.7 440.7 404.3L468.2 383.8Q473.0 380.2 479.0 380.8L589.5 392.2Q594.5 392.7 590.9 396.2L569.6 417.2Q566.0 420.7 561.0 420.1Z" fill="#3f4744"/>
<path d="M441.5 405.8Q437.5 405.3 440.7 402.9L468.2 382.4Q473.0 378.8 479.0 379.4L589.5 390.8Q594.5 391.3 590.9 394.8L569.6 415.8Q566.0 419.3 561.0 418.8Z" fill="#3f4744"/>
<path d="M441.5 404.4Q437.5 404.0 440.7 401.6L468.2 381.1Q473.0 377.5 479.0 378.1L589.5 389.5Q594.5 390.0 590.9 393.5L569.6 414.5Q566.0 418.0 561.0 417.5Z" fill="#3f4744"/>
<path d="M441.5 404.4Q437.5 404.0 440.7 401.6L468.2 381.1Q473.0 377.5 479.0 378.1L589.5 389.5Q594.5 390.0 590.9 393.5L569.6 414.5Q566.0 418.0 561.0 417.5Z" fill="#4a5350"/>
<path d="M445.5 403.5Q442.1 403.1 444.9 401.0L470.4 381.9Q474.4 379.0 479.4 379.5L586.2 390.5Q590.7 390.9 587.5 394.1L567.9 413.3Q564.7 416.5 560.2 416.0Z" fill="none" stroke="#69736f" stroke-width="1.1" opacity="0.8"/>
<path d="M449.6 402.5Q446.6 402.2 449.0 400.4L472.6 382.8Q475.8 380.4 479.8 380.8L582.9 391.4Q586.9 391.8 584.1 394.6L566.3 412.1Q563.4 414.9 559.5 414.5Z" fill="url(#gE)"/>
<path d="M446.6 402.2L563.4 414.9L586.9 391.8" fill="none" stroke="#8a938f" stroke-width="0.8" opacity="0.45"/>
<path d="M499.1 399.3v7a17.4 5.3 0 0 0 34.8 0v-7z" fill="#272f2c" opacity=".6"/>
<path d="M499.1 406.3a17.4 5.3 0 0 0 34.8 0" fill="none" stroke="#7d8783" stroke-width=".8" opacity=".5"/>
<ellipse cx="516.5" cy="399.3" rx="17.599999999999998" ry="5.2" fill="#4a5350" stroke="#272f2c" stroke-width="2" stroke-opacity=".9"/>
<path d="M501.6 400.1a14.899999999999999 3.4 0 0 0 29.799999999999997 0a14.899999999999999 4.6 0 0 1 -29.799999999999997 0z" fill="#7d8783" opacity="0.52"/>
</g>
</svg>
</div>
</body>
</html>
